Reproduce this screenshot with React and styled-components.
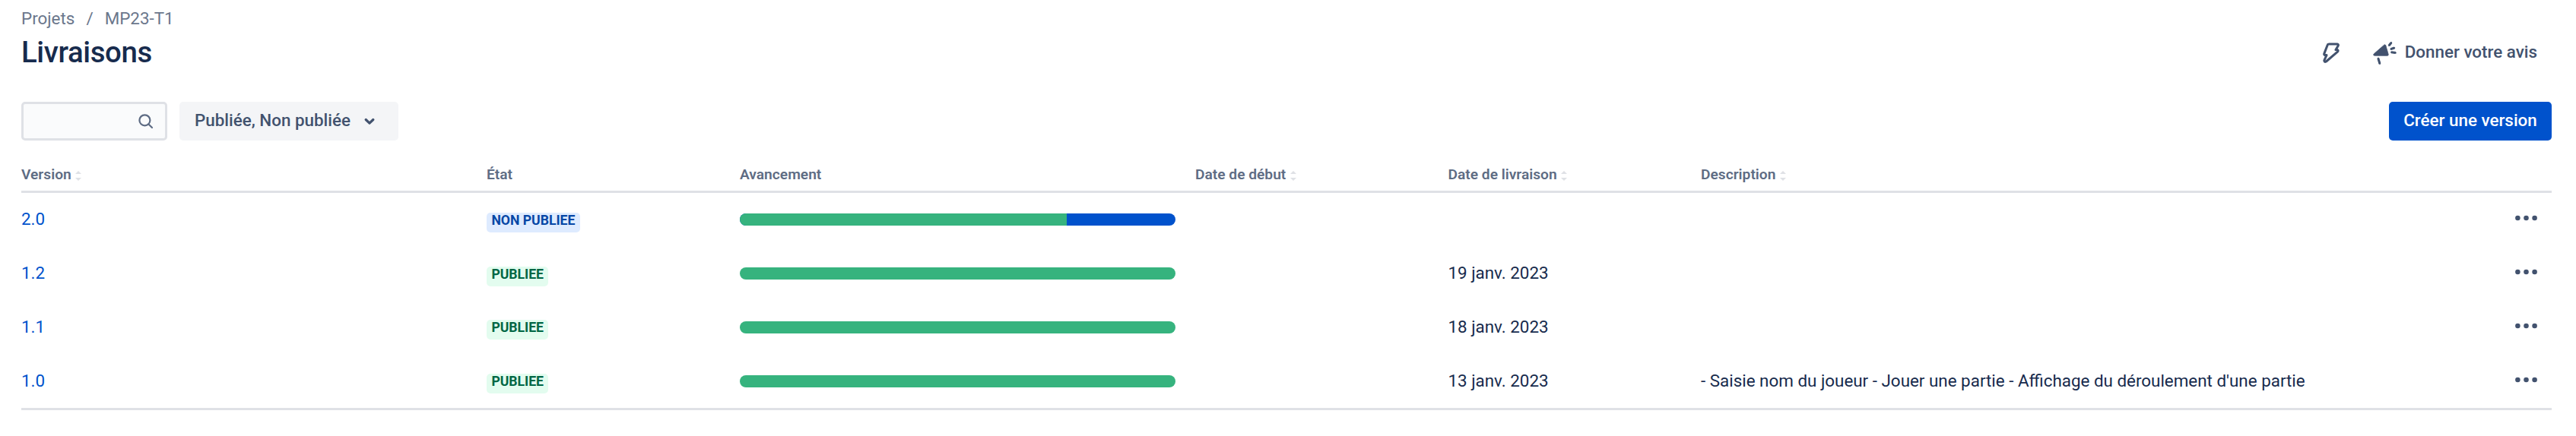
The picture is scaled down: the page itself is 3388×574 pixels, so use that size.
import React from 'react';
import styled, { createGlobalStyle } from 'styled-components';

const GlobalStyle = createGlobalStyle`
  * { box-sizing: border-box; }
  body { margin: 0; background: #fff; }
`;

const Page = styled.main`
  width: 100%;
  height: 574px;
  padding: 6px 32px 0 28px;
  overflow: hidden;
  color: #172b4d;
  font: 400 22.4px/32px Roboto, "Liberation Sans", sans-serif;
`;

const Breadcrumbs = styled.nav`
  display: flex;
  height: 36px;
  gap: 15px;
  color: #6b778c;
  line-height: 36px;
`;

const TitleRow = styled.header`
  display: flex;
  align-items: center;
  justify-content: space-between;
  height: 51px;
`;

const Title = styled.h1`
  margin: 0;
  padding-top: 2px;
  font-size: 38.4px;
  font-weight: 500;
  line-height: 45px;
  letter-spacing: -0.384px;
`;

const HeaderActions = styled.div`
  display: flex;
  align-items: center;
  padding-right: 19px;
  color: #42526e;
`;

const IconButton = styled.button`
  display: flex;
  align-items: center;
  justify-content: center;
  border: 0;
  padding: 0;
  background: none;
  color: #42526e;
  width: 38px;
  height: 38px;
`;

const AutomationButton = styled(IconButton)`
  margin-right: 36px;
  padding-top: 5px;
`;

const RowMenuButton = styled(IconButton)`
  width: 29px;
  height: 32px;
  padding-bottom: 4px;
`;

const FeedbackButton = styled.button`
  display: flex;
  align-items: center;
  gap: 10px;
  border: 0;
  padding: 0;
  background: none;
  color: inherit;
  font: inherit;
  font-weight: 500;
  white-space: nowrap;

  svg {
    margin-top: 4px;
  }
`;

const Toolbar = styled.div`
  display: flex;
  align-items: center;
  margin-top: 41px;
  height: 51px;
`;

const SearchField = styled.div`
  display: flex;
  align-items: center;
  justify-content: flex-end;
  width: 192px;
  height: 51px;
  padding-right: 15px;
  border: 3px solid #dfe1e6;
  border-radius: 5px;
  background: #fafbfc;
  color: #5e6c84;
`;

const FilterButton = styled.button`
  display: flex;
  align-items: center;
  gap: 18px;
  width: 288px;
  height: 51px;
  margin-left: 16px;
  padding: 0 0 3px 20px;
  border: 0;
  border-radius: 5px;
  background: #f4f5f7;
  color: #42526e;
  font: inherit;
  font-weight: 500;
  white-space: nowrap;

  svg {
    margin-top: 4px;
  }
`;

const PrimaryButton = styled.button`
  width: 214px;
  height: 51px;
  margin-left: auto;
  padding: 0 0 3px;
  border: 0;
  border-radius: 5px;
  background: #0052cc;
  color: #fff;
  font: inherit;
  font-weight: 500;
  white-space: nowrap;
`;

const Table = styled.section`
  margin-top: 23px;
  border-bottom: 3px solid #dfe1e6;
`;

const Row = styled.div`
  display: grid;
  grid-template-columns: 612px 333px 599px 332.5px 332.5px 1fr 29px;
  align-items: center;
  height: 70.75px;
  padding-right: 19px;
`;

const HeaderRow = styled(Row)`
  height: 46px;
  padding-top: 1px;
  border-bottom: 3px solid #dfe1e6;
`;

const HeaderCell = styled.div`
  display: flex;
  align-items: center;
  gap: 5.5px;
  color: #5e6c84;
  font-size: 19.2px;
  font-weight: 600;
  line-height: 26px;
  white-space: nowrap;

  svg {
    margin-top: 3px;
  }
`;

const Cell = styled.div`
  padding-bottom: 2px;
  white-space: nowrap;
`;

const VersionLink = styled.a`
  color: #0052cc;
  text-decoration: none;
`;

const Lozenge = styled.span`
  display: block;
  width: fit-content;
  height: 26px;
  margin-top: 7px;
  padding: 0 6.4px;
  border-radius: 5px;
  background: ${(p) => (p.$released ? '#e3fcef' : '#deebff')};
  color: ${(p) => (p.$released ? '#006644' : '#0747a6')};
  font-size: 17.6px;
  font-weight: 700;
  line-height: 21px;
`;

const ProgressTrack = styled.div`
  display: flex;
  width: 573px;
  height: 16px;
  overflow: hidden;
  border-radius: 8px;
  background: #0052cc;
`;

const ProgressDone = styled.div`
  background: #36b37e;
`;

const SortIcon = () => (
  <svg width="8" height="14" viewBox="0 0 8 14" fill="#dfe1e6">
    <path d="M4 0 8 4H0ZM0 9H8L4 13Z" />
  </svg>
);

const BoltIcon = () => (
  <svg width="22" height="28" viewBox="0 0 22 28" fill="none" stroke="currentColor" strokeWidth="3" strokeLinejoin="round">
    <path d="M7.4 2H19Q20.7 2.3 20.3 4L17 9.6H19.4Q20.8 10.8 19.4 12.2L4.4 25Q1.8 26.2 1.8 23.6L5 16.6H2.8Q1.3 16.2 1.8 14.6L6.2 3.2Q6.6 2 7.8 2" />
  </svg>
);

const MegaphoneIcon = () => (
  <svg width="32" height="32" viewBox="0 0 32 32" stroke="currentColor">
    <path d="M1.6 16.6 14.6 5.2Q16.2 4.1 16.8 5.8L20.2 17.6Q20.5 19.3 18.8 19.3L2 19.2Q-0.6 18.6 1.6 16.6Z" fill="currentColor" strokeWidth="0.8" />
    <path d="M6.8 22.6 9 30M21 6 24.2 2M23.4 10.7 28.2 9M24 14.7 29.8 15.6" fill="none" strokeWidth="3" />
    <path d="M6.8 22.6 9 30M21 6 24.2 2M23.4 10.7 28.2 9M24 14.7 29.8 15.6" fill="none" strokeWidth="2" strokeLinecap="round" />
  </svg>
);

const SearchIcon = () => (
  <svg width="20" height="20" viewBox="0 0 20 20" fill="none" stroke="currentColor" strokeWidth="2.2" strokeLinecap="round">
    <circle cx="8.4" cy="8.3" r="7" />
    <path d="M13.4 13.5 18 18" />
  </svg>
);

const ChevronIcon = () => (
  <svg width="14" height="10" viewBox="0 0 14 10" fill="none" stroke="currentColor" strokeWidth="3.2" strokeLinecap="round" strokeLinejoin="round">
    <path d="M2.2 2.5 7 7.1 11.8 2.5" />
  </svg>
);

const MoreIcon = () => (
  <svg width="30" height="8" viewBox="0 0 30 8" fill="currentColor">
    <circle cx="3.5" cy="4" r="3.4" />
    <circle cx="15" cy="4" r="3.4" />
    <circle cx="26.5" cy="4" r="3.4" />
  </svg>
);

const columns = [
  { label: 'Version', sortable: true },
  { label: 'État' },
  { label: 'Avancement' },
  { label: 'Date de début', sortable: true },
  { label: 'Date de livraison', sortable: true },
  { label: 'Description', sortable: true },
];

const versions = [
  { name: '2.0', released: false, done: 75, date: '', description: '' },
  { name: '1.2', released: true, done: 100, date: '19 janv. 2023', description: '' },
  { name: '1.1', released: true, done: 100, date: '18 janv. 2023', description: '' },
  {
    name: '1.0',
    released: true,
    done: 100,
    date: '13 janv. 2023',
    description: "- Saisie nom du joueur - Jouer une partie - Affichage du déroulement d'une partie",
  },
];

export default function App() {
  return (
    <Page>
      <GlobalStyle />
      <Breadcrumbs>
        <span>Projets</span>
        <span>/</span>
        <span>MP23-T1</span>
      </Breadcrumbs>
      <TitleRow>
        <Title>Livraisons</Title>
        <HeaderActions>
          <AutomationButton><BoltIcon /></AutomationButton>
          <FeedbackButton><MegaphoneIcon />Donner votre avis</FeedbackButton>
        </HeaderActions>
      </TitleRow>
      <Toolbar>
        <SearchField><SearchIcon /></SearchField>
        <FilterButton>Publiée, Non publiée<ChevronIcon /></FilterButton>
        <PrimaryButton>Créer une version</PrimaryButton>
      </Toolbar>
      <Table>
        <HeaderRow>
          {columns.map((c) => (
            <HeaderCell key={c.label}>{c.label}{c.sortable && <SortIcon />}</HeaderCell>
          ))}
        </HeaderRow>
        {versions.map((v) => (
          <Row key={v.name}>
            <Cell><VersionLink>{v.name}</VersionLink></Cell>
            <Lozenge $released={v.released}>{v.released ? 'PUBLIEE' : 'NON PUBLIEE'}</Lozenge>
            <ProgressTrack><ProgressDone style={{ width: `${v.done}%` }} /></ProgressTrack>
            <Cell />
            <Cell>{v.date}</Cell>
            <Cell>{v.description}</Cell>
            <RowMenuButton><MoreIcon /></RowMenuButton>
          </Row>
        ))}
      </Table>
    </Page>
  );
}
